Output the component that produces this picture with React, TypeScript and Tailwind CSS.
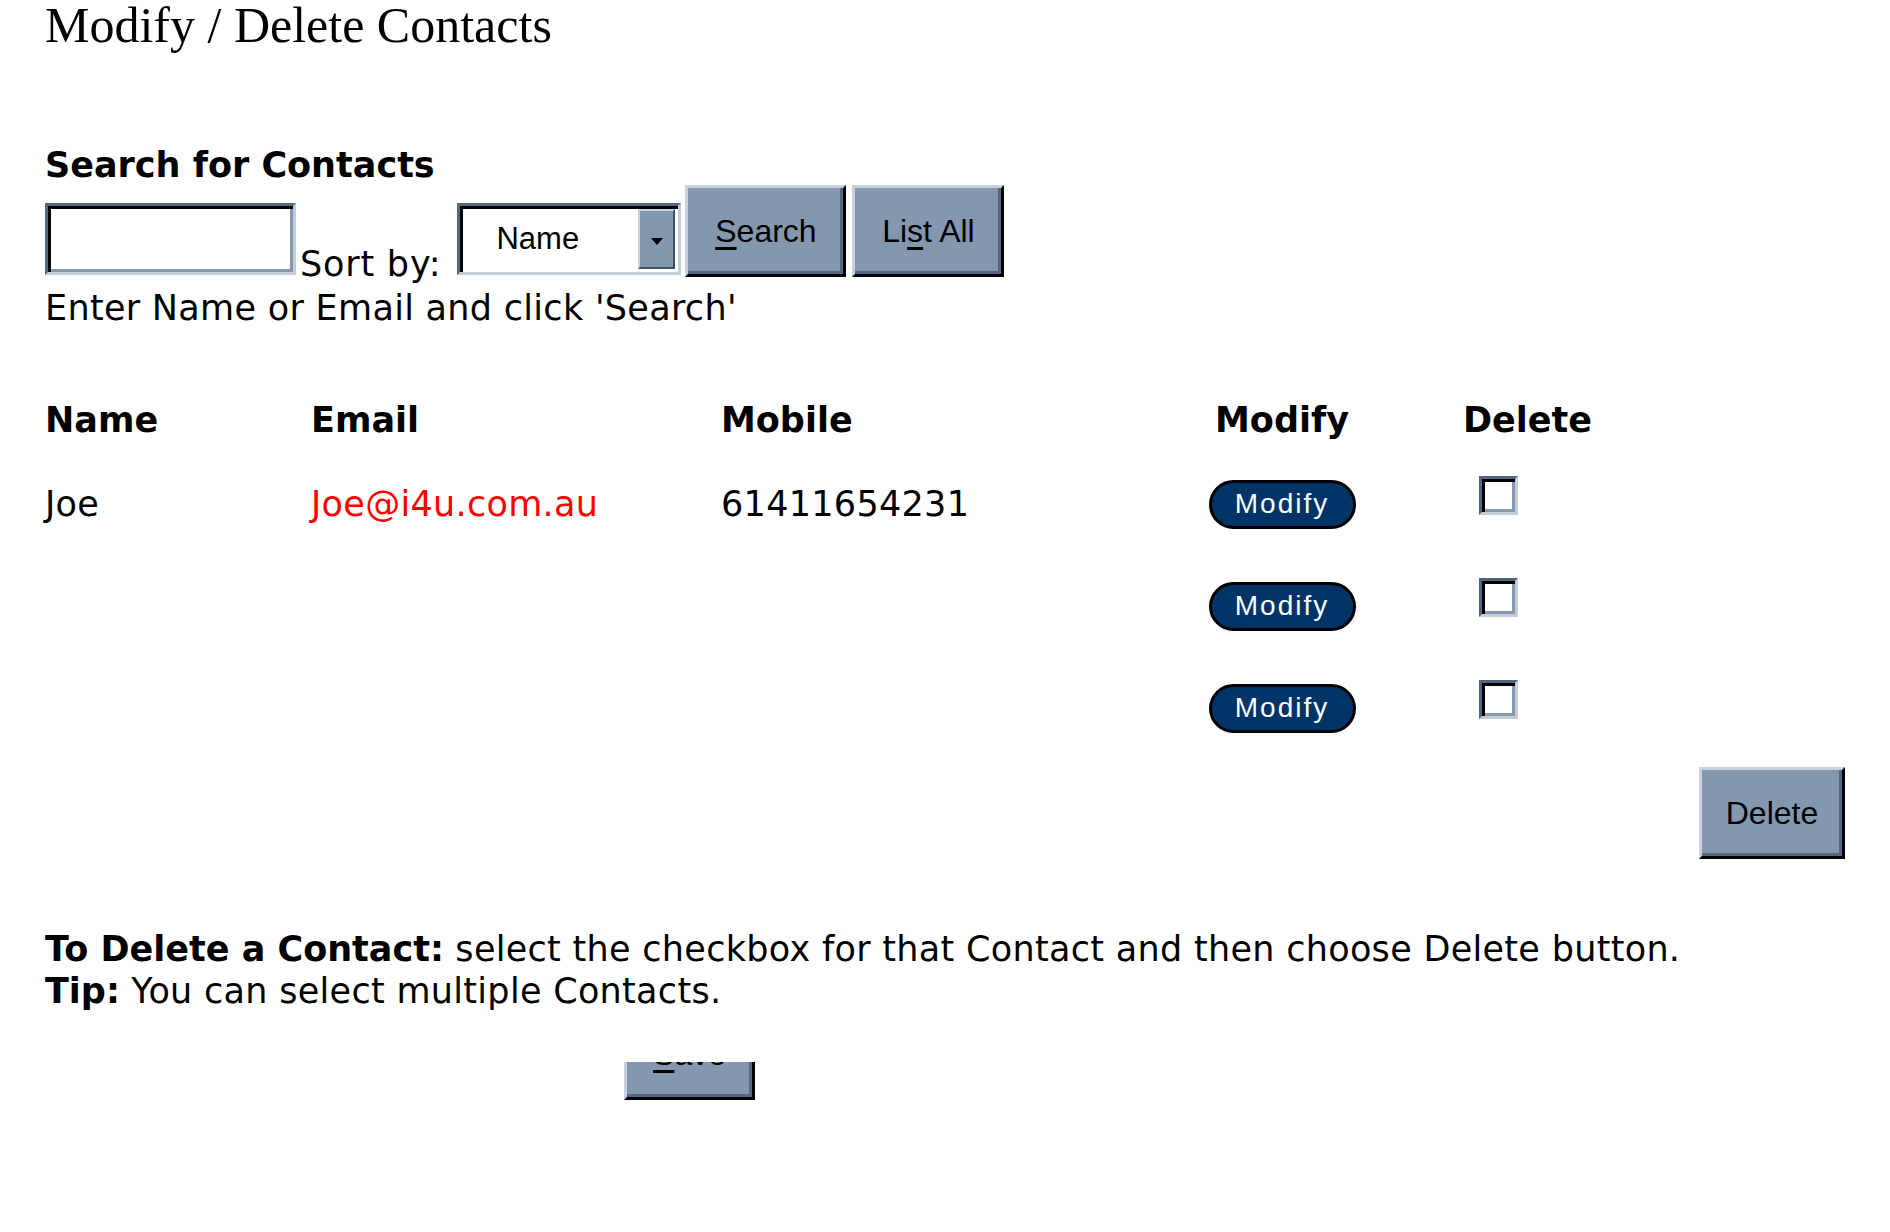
import React from 'react'

// Raised grey-blue button with classic bevel
function BevelButton({ children, className = '' }: { children: React.ReactNode; className?: string }) {
  return (
    <div
      className={`flex items-center justify-center bg-[#8397af] border-[3px] border-t-[#c8d2de] border-l-[#c8d2de] border-b-black border-r-black shadow-[inset_-3px_-3px_0_#53677f] text-[32px] tracking-normal text-black font-['Liberation_Sans',Arial,sans-serif] ${className}`}
    >
      {children}
    </div>
  )
}

function Checkbox() {
  return (
    <div className="w-[39px] h-[39px] bg-white border-[3px] border-t-[#52657d] border-l-[#52657d] border-b-[#c3cdd9] border-r-[#c3cdd9] shadow-[inset_3px_3px_0_#000,inset_-3px_-3px_0_#8598af]" />
  )
}

function ModifyPill() {
  return (
    <div className="w-[147px] h-[49px] rounded-full bg-[#003366] border-[3px] border-black flex items-center justify-center text-white text-[28px] tracking-[2px] font-['Liberation_Sans',Arial,sans-serif]">
      Modify
    </div>
  )
}

const rows = [
  { name: 'Joe', email: 'Joe@i4u.com.au', mobile: '61411654231' },
  { name: '', email: '', mobile: '' },
  { name: '', email: '', mobile: '' },
]

export default function App() {
  return (
    <div className="min-h-[1232px] bg-white px-[45px] text-black font-['DejaVu_Sans',Verdana,sans-serif] text-[35px] leading-[42px] tracking-[0.3px]">
      <h1 className="pt-[6px] font-['Liberation_Serif','Times_New_Roman',serif] text-[50px] leading-[38px] font-normal tracking-normal">
        Modify / Delete Contacts
      </h1>

      <div className="mt-[101px] font-bold leading-[40px] tracking-normal">Search for Contacts</div>

      <div className="flex items-end h-[92px]">
        <div className="w-[251px] h-[72px] mb-[2px] bg-white border-[3px] border-t-[#56697f] border-l-[#56697f] border-b-[#c3cdd9] border-r-[#c3cdd9] shadow-[inset_3px_3px_0_#000,inset_-3px_-3px_0_#8598af]" />
        <span className="ml-[4px] leading-none mb-[-5px] tracking-[0.8px]">Sort by:</span>
        <div className="ml-[16px] w-[224px] h-[72px] mb-[2px] bg-white border-[3px] border-t-[#56697f] border-l-[#56697f] border-b-[#c3cdd9] border-r-[#c3cdd9] shadow-[inset_3px_3px_0_#000] flex items-stretch p-[3px]">
          <div className="flex-1 flex items-center pl-[33px] text-[31px] tracking-normal font-['Liberation_Sans',Arial,sans-serif]">Name</div>
          <div className="w-[37px] bg-[#8397af] border-[2px] border-t-[#c8d2de] border-l-[#c8d2de] border-b-[#3e4f63] border-r-[#3e4f63] flex items-center justify-center pt-[6px]">
            <svg width="12" height="8" viewBox="0 0 12 8">
              <path d="M0 0 H12 L6 7 Z" fill="#000" />
            </svg>
          </div>
        </div>
        <BevelButton className="ml-[4px] w-[161px] h-[92px]">
          <span>
            <span className="underline underline-offset-[5px]">S</span>earch
          </span>
        </BevelButton>
        <BevelButton className="ml-[6px] w-[152px] h-[92px]">
          <span>
            Li<span className="underline underline-offset-[5px]">s</span>t All
          </span>
        </BevelButton>
      </div>

      <div className="mt-[10px]">Enter Name or Email and click 'Search'</div>

      {/* contacts table */}
      <div className="mt-[70px]">
        <div className="flex h-[54px] font-bold tracking-normal">
          <div className="w-[266px]">Name</div>
          <div className="w-[410px]">Email</div>
          <div className="w-[466px]">Mobile</div>
          <div className="w-[190px] flex justify-center">Modify</div>
          <div className="pl-[86px]">Delete</div>
        </div>
        {rows.map((row, i) => (
          <div key={i} className="flex items-center h-[102px]">
            <div className="w-[266px]">{row.name}</div>
            <div className="w-[410px] text-[#ff0000]">{row.email}</div>
            <div className="w-[466px]">{row.mobile}</div>
            <div className="w-[190px] flex justify-center">
              <ModifyPill />
            </div>
            <div className="pl-[102px] mb-[18px]">
              <Checkbox />
            </div>
          </div>
        ))}
      </div>

      <div className="flex justify-end mt-[8px]">
        <BevelButton className="w-[146px] h-[92px]">Delete</BevelButton>
      </div>

      <div className="mt-[69px]">
        <div>
          <span className="font-bold tracking-normal">To Delete a Contact:</span> select the checkbox for that Contact and then choose Delete button.
        </div>
        <div>
          <span className="font-bold tracking-normal">Tip:</span> You can select multiple Contacts.
        </div>
      </div>

      <div className="mt-[50px] ml-[579px] w-[131px] h-[38px] overflow-hidden flex items-end">
        <BevelButton className="w-[131px] h-[92px] shrink-0">
          <span>
            <span className="underline underline-offset-[5px]">S</span>ave
          </span>
        </BevelButton>
      </div>
    </div>
  )
}
